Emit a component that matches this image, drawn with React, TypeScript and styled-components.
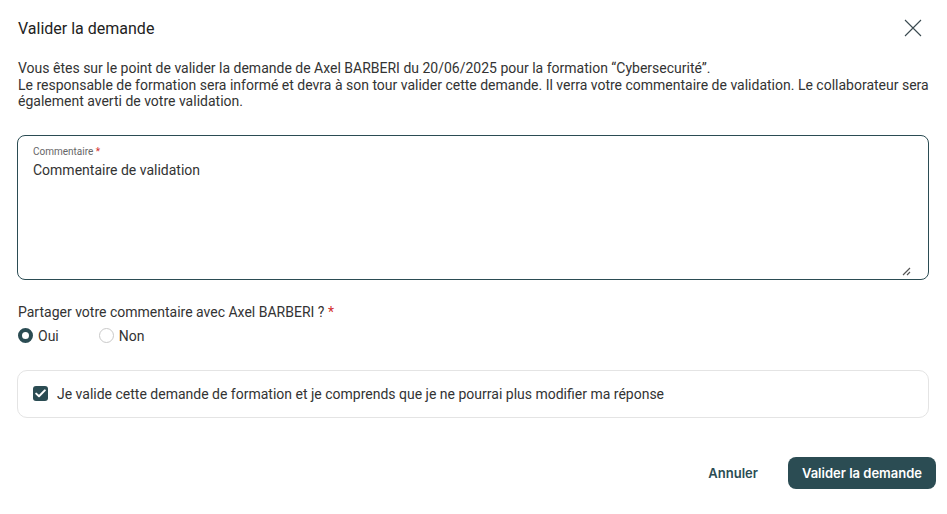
import React, { useState } from 'react';
import styled, { createGlobalStyle } from 'styled-components';

const TEAL = '#2b4c53';

const GlobalStyle = createGlobalStyle`
  html, body {
    margin: 0;
    padding: 0;
    background: #fff;
  }
  body {
    font-family: Roboto, "Liberation Sans", sans-serif;
    color: #333;
  }
  * { box-sizing: border-box; }
`;

const Dialog = styled.div`
  width: 947px;
  height: 514px;
  display: flex;
  flex-direction: column;
  background: #fff;
`;

const Header = styled.div`
  display: flex;
  align-items: center;
  justify-content: space-between;
  padding: 18px 24px 0 18px;
  height: 38px;
`;

const Title = styled.h2`
  margin: 0;
  font-size: 16px;
  font-weight: 400;
  color: #222;
`;

const CloseButton = styled.button`
  border: 0;
  background: none;
  padding: 0;
  width: 20px;
  height: 20px;
  display: flex;
  align-items: center;
  justify-content: center;
  cursor: pointer;
`;

const Body = styled.div`
  padding: 22px 18px 0 17px;
  display: flex;
  flex-direction: column;
`;

const Intro = styled.p`
  margin: 0 0 0 1px;
  font-size: 14px;
  line-height: 16.5px;
  color: #333;
`;

const FieldBox = styled.label`
  display: block;
  position: relative;
  margin-top: 25px;
  height: 145px;
  border: 1px solid ${TEAL};
  border-radius: 8px;
  padding: 10px 15px;
`;

const FieldLabel = styled.span`
  display: block;
  font-size: 10px;
  color: #666;
  line-height: 12px;
`;

const Required = styled.span`
  color: #d32f2f;
`;

const TextArea = styled.textarea`
  display: block;
  width: 100%;
  height: 110px;
  border: 0;
  outline: none;
  resize: none;
  padding: 0;
  margin-top: 3px;
  font-family: Roboto, "Liberation Sans", sans-serif;
  font-size: 14px;
  line-height: 18px;
  color: #333;
`;

const Grip = styled.svg`
  position: absolute;
  right: 17px;
  bottom: 3px;
`;

const Question = styled.div`
  margin: 24px 0 0 1px;
  font-size: 14px;
  line-height: 16px;
  color: #333;
`;

const RadioRow = styled.div`
  display: flex;
  gap: 40px;
  margin: 8px 0 0 1px;
`;

const RadioOption = styled.label`
  display: flex;
  align-items: center;
  gap: 5px;
  font-size: 14px;
  color: #333;
  cursor: pointer;
`;

const RadioDot = styled.span<{ $checked: boolean }>`
  width: 15px;
  height: 15px;
  border-radius: 50%;
  border: ${({ $checked }) => ($checked ? `4px solid ${TEAL}` : '1px solid #c9c9c9')};
  background: #fff;
`;

const ConfirmCard = styled.label`
  display: flex;
  align-items: center;
  gap: 9px;
  margin-top: 26px;
  height: 48px;
  border: 1px solid #e4e4e4;
  border-radius: 10px;
  padding: 0 15px;
  font-size: 14px;
  color: #333;
  cursor: pointer;
`;

const CheckBox = styled.span<{ $checked: boolean }>`
  width: 15px;
  height: 15px;
  border-radius: 3px;
  background: ${({ $checked }) => ($checked ? TEAL : '#fff')};
  border: ${({ $checked }) => ($checked ? 'none' : '1px solid #c9c9c9')};
  display: flex;
  align-items: center;
  justify-content: center;
`;

const Footer = styled.div`
  margin-top: auto;
  display: flex;
  justify-content: flex-end;
  align-items: center;
  gap: 30px;
  padding: 0 11px 25px 0;
`;

const Button = styled.button<{ $primary?: boolean }>`
  font-family: Inter, "Liberation Sans", sans-serif;
  font-size: 13px;
  font-weight: 600;
  border: 0;
  border-radius: 8px;
  height: 32px;
  padding: 0 ${({ $primary }) => ($primary ? '14px' : '0')};
  background: ${({ $primary }) => ($primary ? TEAL : 'transparent')};
  color: ${({ $primary }) => ($primary ? '#fff' : TEAL)};
  cursor: pointer;
`;

const App = () => {
  const [share, setShare] = useState(true);
  const [confirmed, setConfirmed] = useState(true);

  return (
    <Dialog>
      <GlobalStyle />
      <Header>
        <Title>Valider la demande</Title>
        <CloseButton aria-label="Fermer">
          <svg width="18" height="18" viewBox="0 0 18 18">
            <path d="M1 1L17 17M17 1L1 17" stroke="#3a4a50" strokeWidth="1.1" fill="none" />
          </svg>
        </CloseButton>
      </Header>
      <Body>
        <Intro>
          Vous êtes sur le point de valider la demande de Axel BARBERI du 20/06/2025 pour la formation “Cybersecurité”.
          <br />
          Le responsable de formation sera informé et devra à son tour valider cette demande. Il verra votre commentaire de validation. Le collaborateur sera également averti de votre validation.
        </Intro>
        <FieldBox>
          <FieldLabel>
            Commentaire <Required>*</Required>
          </FieldLabel>
          <TextArea defaultValue="Commentaire de validation" />
          <Grip width="9" height="9" viewBox="0 0 9 9">
            <path d="M1 8L8 1M5 8L8 5" stroke="#555" strokeWidth="1.2" />
          </Grip>
        </FieldBox>
        <Question>
          Partager votre commentaire avec Axel BARBERI ? <Required>*</Required>
        </Question>
        <RadioRow>
          <RadioOption onClick={() => setShare(true)}>
            <RadioDot $checked={share} />
            Oui
          </RadioOption>
          <RadioOption onClick={() => setShare(false)}>
            <RadioDot $checked={!share} />
            Non
          </RadioOption>
        </RadioRow>
        <ConfirmCard onClick={() => setConfirmed(!confirmed)}>
          <CheckBox $checked={confirmed}>
            {confirmed && (
              <svg width="11" height="9" viewBox="0 0 11 9">
                <path d="M1.2 4.6L4 7.3L9.8 1.4" stroke="#fff" strokeWidth="2" fill="none" strokeLinecap="round" strokeLinejoin="round" />
              </svg>
            )}
          </CheckBox>
          Je valide cette demande de formation et je comprends que je ne pourrai plus modifier ma réponse
        </ConfirmCard>
      </Body>
      <Footer>
        <Button>Annuler</Button>
        <Button $primary>Valider la demande</Button>
      </Footer>
    </Dialog>
  );
};

export default App;
